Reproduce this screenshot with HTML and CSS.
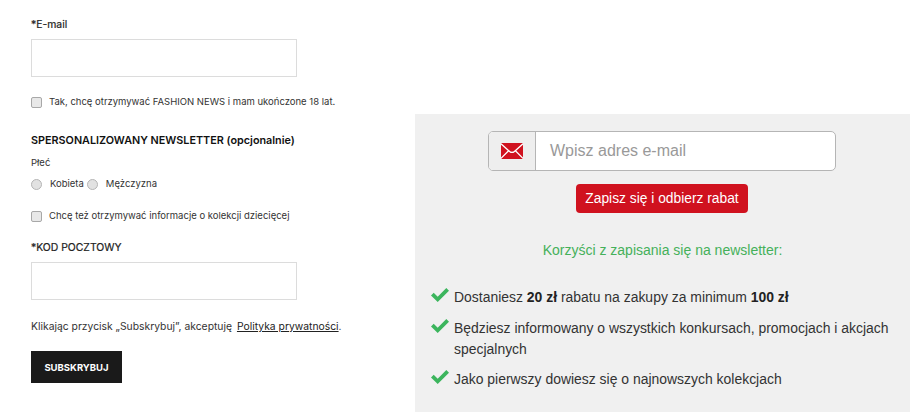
FILE: index.html
```html
<!DOCTYPE html>
<html lang="pl">
<head>
<meta charset="utf-8">
<title>Newsletter</title>
<link rel="stylesheet" href="styles.css">
</head>
<body>
<div class="page">
  <form class="form">
    <label class="field-label">*E-mail</label>
    <div class="text-input"></div>
    <label class="check-row first-check"><span class="box"></span><span class="small">Tak, chcę otrzymywać FASHION NEWS i mam ukończone 18 lat.</span></label>
    <h3 class="section-title">SPERSONALIZOWANY NEWSLETTER (opcjonalnie)</h3>
    <div class="small gender">Płeć</div>
    <div class="radio-row">
      <span class="radio"></span><span class="small radio-text">Kobieta</span>
      <span class="radio"></span><span class="small radio-text">Mężczyzna</span>
    </div>
    <label class="check-row second-check"><span class="box"></span><span class="small">Chcę też otrzymywać informacje o kolekcji dziecięcej</span></label>
    <label class="field-label postal">*KOD POCZTOWY</label>
    <div class="text-input"></div>
    <p class="terms">Klikając przycisk „Subskrybuj”, akceptuję <a class="terms-link">Polityka prywatności</a>.</p>
    <div class="submit">SUBSKRYBUJ</div>
  </form>
  <section class="panel">
    <div class="input-group">
      <span class="addon">
        <svg class="mail" viewBox="0 0 22 16" width="22" height="16"><rect fill="#d0121f" width="22" height="16" rx="1"/><path fill="none" stroke="#fff" stroke-width="1.3" d="M0 .8l8.6 7.6q2.4 2 4.8 0L22 .8M0 15.4l7.6-7.6M22 15.4l-7.6-7.6"/></svg>
      </span>
      <span class="placeholder">Wpisz adres e-mail</span>
    </div>
    <div class="cta">Zapisz się i odbierz rabat</div>
    <p class="benefits-title">Korzyści z zapisania się na newsletter:</p>
    <ul class="benefits">
      <li><svg class="check" viewBox="0 0 18 14" width="18" height="14"><path fill="#3cb55d" d="M0 7.4l2.7-2.7 4 4L15.3 0 18 2.7 6.7 14z"/></svg><span>Dostaniesz <b>20 zł</b> rabatu na zakupy za minimum <b>100 zł</b></span></li>
      <li><svg class="check" viewBox="0 0 18 14" width="18" height="14"><path fill="#3cb55d" d="M0 7.4l2.7-2.7 4 4L15.3 0 18 2.7 6.7 14z"/></svg><span>Będziesz informowany o wszystkich konkursach, promocjach i akcjach specjalnych</span></li>
      <li><svg class="check" viewBox="0 0 18 14" width="18" height="14"><path fill="#3cb55d" d="M0 7.4l2.7-2.7 4 4L15.3 0 18 2.7 6.7 14z"/></svg><span>Jako pierwszy dowiesz się o najnowszych kolekcjach</span></li>
    </ul>
  </section>
</div>
</body>
</html>
```
FILE: styles.css
```css
* { box-sizing: border-box; }
html, body { margin: 0; padding: 0; background: #fff; }
body { width: 910px; height: 412px; overflow: hidden; font-family: "Inter", "Liberation Sans", sans-serif; color: #222; }
.page { display: flex; height: 412px; }
.form { width: 415px; padding: 18px 0 0 31px; display: flex; flex-direction: column; align-items: flex-start; }
.field-label { font-size: 10.4px; line-height: 14px; color: #222; -webkit-text-stroke: 0.2px #222; }
.text-input { width: 266px; height: 38px; margin-top: 7px; border: 1px solid #dcdcdc; background: #fff; }
.check-row { display: flex; align-items: center; height: 14px; }
.first-check { margin-top: 18px; }
.box { width: 11px; height: 11px; margin-right: 7px; background: #e8e8e8; border: 1px solid #a8a8a8; border-radius: 2px; }
.small { font-size: 9.5px; line-height: 14px; color: #333; }
.section-title { margin: 25px 0 0; font-size: 10.8px; line-height: 14px; font-weight: 600; color: #111; }
.gender { margin-top: 8px; }
.radio-row { display: flex; align-items: center; height: 14px; margin-top: 7px; }
.radio { width: 11px; height: 11px; border-radius: 50%; background: #e2e2e2; border: 1px solid #b5b5b5; }
.radio-text { margin-left: 8px; margin-right: 3px; }
.second-check { margin-top: 18px; }
.postal { margin-top: 18px; }
.terms { margin: 19px 0 0; font-size: 10.35px; line-height: 14px; color: #333; }
.terms-link { margin-left: 2px; color: #222; text-decoration: underline; }
.submit { margin-top: 18px; width: 91px; height: 32px; background: #1a1a1a; color: #fff; font-size: 9.5px; font-weight: 700; display: flex; align-items: center; justify-content: center; }
.panel { width: 495px; margin-top: 114px; background: #f0f0f0; padding: 17px 0 0 17px; font-family: "Liberation Sans", Arial, sans-serif; }
.input-group { display: flex; width: 348px; height: 40px; margin-left: 56px; border: 1px solid #b5b5b5; border-radius: 5px; background: #fff; overflow: hidden; }
.addon { width: 47px; background: #eeeeee; border-right: 1px solid #b5b5b5; display: flex; align-items: center; justify-content: center; }
.mail { display: block; }
.placeholder { padding-left: 14px; font-size: 16px; line-height: 38px; color: #999; }
.cta { width: 172px; height: 29px; margin: 13px 0 0 144px; background: #d0121f; border-radius: 4px; color: #fff; font-size: 13.8px; display: flex; align-items: center; justify-content: center; }
.benefits-title { margin: 29px 0 0; width: 461px; text-align: center; font-size: 14px; line-height: 16px; color: #45b05a; }
.benefits { list-style: none; margin: 29px 0 0 -1px; padding: 0; width: 478px; font-size: 13.95px; line-height: 21px; color: #333; }
.benefits li { display: flex; align-items: flex-start; margin-bottom: 9.5px; }
.benefits b { color: #222; }
.check { flex: none; margin: 1px 5px 0 0; }
```
